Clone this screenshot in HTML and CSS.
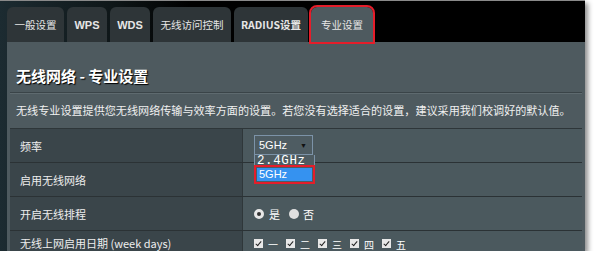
FILE: index.html
```html
<!DOCTYPE html>
<html lang="zh-CN">
<head>
<meta charset="UTF-8">
<title>专业设置</title>
<link rel="stylesheet" href="styles.css">
</head>
<body>

<div class="frame">
  <div class="tabs">
    <div class="tab tab-w1">一般设置</div>
    <div class="tab tab-w2">WPS</div>
    <div class="tab tab-w2">WDS</div>
    <div class="tab tab-w3">无线访问控制</div>
    <div class="tab tab-w4">RADIUS设置</div>
    <div class="tab tab-w1 active">专业设置</div>
  </div>

  <div class="panel">
    <h1>无线网络 - 专业设置</h1>
    <div class="divider"></div>
    <p class="desc">无线专业设置提供您无线网络传输与效率方面的设置。若您没有选择适合的设置，建议采用我们校调好的默认值。</p>

    <div class="table">
      <div class="row">
        <div class="label">频率</div>
        <div class="value">
          <div class="select">
            <span>5GHz</span>
            <span class="arrow">▼</span>
            <div class="options">
              <div class="opt">2.4GHz</div>
              <div class="opt picked">5GHz</div>
            </div>
          </div>
        </div>
      </div>
      <div class="row">
        <div class="label">启用无线网络</div>
        <div class="value"></div>
      </div>
      <div class="row">
        <div class="label">开启无线排程</div>
        <div class="value">
          <span class="radio on"></span><span class="opt-text">是</span>
          <span class="radio"></span><span class="opt-text">否</span>
        </div>
      </div>
      <div class="row last">
        <div class="label">无线上网启用日期 (week days)</div>
        <div class="value">
          <span class="check"></span><span class="day">一</span>
          <span class="check"></span><span class="day">二</span>
          <span class="check"></span><span class="day">三</span>
          <span class="check"></span><span class="day">四</span>
          <span class="check"></span><span class="day">五</span>
        </div>
      </div>
    </div>
  </div>
</div>

</body>
</html>
```

FILE: styles.css
```css
body {
  margin: 0;
  background: #fff;
  font-family: "Liberation Sans", "Noto Sans CJK SC", sans-serif;
  color: #fff;
}
.frame {
  width: 585px;
  height: 251px;
  background: linear-gradient(90deg, #1c2b31 0px, #0f1719 110px, #000 190px);
  border-top: 1px solid #8a8a8a;
  box-shadow: 3px 3px 5px rgba(0,0,0,0.45);
  overflow: hidden;
  box-sizing: border-box;
}
.tabs {
  display: flex;
  gap: 3px;
  padding: 6px 0 0 7px;
  height: 35px;
}
.tab {
  height: 35px;
  background: #2e3538;
  border-radius: 6px 6px 0 0;
  font-size: 10.5px;
  font-family: "Noto Sans CJK SC", sans-serif;
  color: #e6e6e6;
  display: flex;
  align-items: center;
  justify-content: center;
  box-sizing: border-box;
}
.tab-w1 { width: 57px; }
.tab-w2 { width: 40px; font-family: "Liberation Sans", sans-serif; font-weight: bold; font-size: 11px; }
.tab-w3 { width: 78px; }
.tab-w4 { width: 74px; font-weight: bold; }
.tab.active {
  background: #4e5a5f;
  width: 62px;
  outline: 2px solid #e51d2a;
  outline-offset: 0;
}
.panel {
  margin-left: 7px;
  height: 209px;
  background: #4e5a5f;
  padding: 0 3px;
  box-sizing: border-box;
}
h1 {
  margin: 0;
  padding: 23px 0 0 6px;
  height: 50px;
  box-sizing: border-box;
  font-size: 15px;
  font-family: "Noto Sans CJK SC", sans-serif;
  font-weight: bold;
  text-shadow: 1px 1px 1px #000;
}
.divider {
  height: 1px;
  background: #3a4448;
  border-bottom: 1px solid #5e6a6f;
}
.desc {
  margin: 0;
  padding: 8px 0 0 6px;
  height: 34px;
  box-sizing: border-box;
  font-size: 11.1px;
  font-family: "Noto Sans CJK SC", sans-serif;
  color: #f0f0f0;
  white-space: nowrap;
}
.table {
  border-top: 1px solid #2e3639;
}
.row {
  display: flex;
  height: 33px;
  border-bottom: 1px solid #2b3235;
}
.label {
  width: 232px;
  background: #3a454a;
  padding-left: 10px;
  box-sizing: border-box;
  display: flex;
  align-items: center;
  font-size: 11px;
  font-family: "Noto Sans CJK SC", sans-serif;
  color: #eee;
}
.value {
  flex: 1;
  background: #4b595e;
  border-left: 1px solid #2f373a;
  display: flex;
  align-items: center;
  padding-left: 11px;
  font-size: 11px;
  font-family: "Noto Sans CJK SC", sans-serif;
}
.row.last .label,
.row.last .value {
  align-items: flex-start;
  padding-top: 4px;
}
.row.last .value {
  padding-top: 8px;
}
.select {
  position: relative;
  width: 59px;
  height: 20px;
  margin-top: -1px;
  border: 1px solid #7c93a8;
  background: #4e5c62;
  display: flex;
  align-items: center;
  justify-content: space-between;
  padding: 0 5px 0 4px;
  box-sizing: border-box;
  font-family: "Liberation Sans", sans-serif;
  font-size: 11px;
}
.arrow {
  font-size: 7px;
  color: #111;
}
.options {
  position: absolute;
  left: -1px;
  top: 19px;
  width: 59px;
  border: 1px solid #7c93a8;
  border-top: none;
  background: #4e5c62;
  padding-bottom: 2px;
}
.opt {
  height: 13px;
  line-height: 13px;
  padding-left: 2px;
  font-family: "Liberation Mono", monospace;
  font-size: 12.5px;
  letter-spacing: 0.6px;
}
.opt.picked {
  margin: 0 2px;
  background: #3592f0;
  font-family: "Liberation Sans", sans-serif;
  font-size: 11px;
  letter-spacing: 0;
  outline: 2px solid #e51d2a;
  outline-offset: 1px;
}
.radio {
  width: 10px;
  height: 10px;
  border-radius: 50%;
  background: #e0e0e0;
  display: inline-block;
  box-sizing: border-box;
}
.radio.on {
  border: 3px solid #e8e8e8;
  background: #333;
}
.opt-text {
  margin: 0 9px 0 5px;
}
.radio + .opt-text + .radio + .opt-text {
  margin-left: 4px;
}
.check {
  width: 9px;
  height: 9px;
  background: #e8e8e8;
  display: inline-block;
  position: relative;
}
.check::after {
  content: "";
  position: absolute;
  left: 3px;
  top: 1px;
  width: 2px;
  height: 5px;
  border: solid #222;
  border-width: 0 1.5px 1.5px 0;
  transform: rotate(40deg);
}
.day {
  font-size: 10px;
  margin: -2px 8px 0 5px;
}
```
